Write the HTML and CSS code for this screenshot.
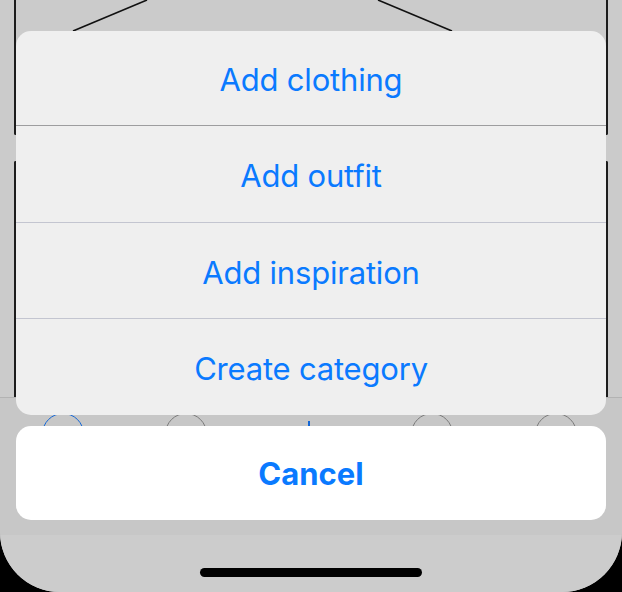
FILE: index.html
```html
<!DOCTYPE html>
<html>
<head>
<meta charset="utf-8">
<link rel="stylesheet" href="styles.css">
</head>
<body>
<div class="phone">
  <div class="screen">
    <div class="card card-top">
      <svg class="hanger" width="594" height="40" viewBox="0 0 594 40">
        <line x1="133" y1="0" x2="59" y2="31" />
        <line x1="364" y1="0" x2="438" y2="31" />
      </svg>
    </div>
    <div class="card card-main"></div>
    <div class="tabbar">
      <span class="tab tab-active"></span>
      <span class="tab"></span>
      <span class="tab-plus"></span>
      <span class="tab"></span>
      <span class="tab"></span>
    </div>
    <div class="home-area">
      <span class="home-indicator"></span>
    </div>
  </div>

  <div class="sheet">
    <div class="group">
      <div class="row row-first">Add clothing</div>
      <div class="row">Add outfit</div>
      <div class="row">Add inspiration</div>
      <div class="row row-last">Create category</div>
    </div>
    <div class="cancel">Cancel</div>
  </div>
</div>
</body>
</html>
```

FILE: styles.css
```css
html, body {
  margin: 0;
  padding: 0;
  background: #000;
}

body {
  width: 622px;
  height: 592px;
  overflow: hidden;
  font-family: Inter, "Liberation Sans", sans-serif;
}

.phone {
  position: relative;
  width: 622px;
  height: 592px;
  background: #cbcbcb;
  border-radius: 0 0 60px 60px;
  overflow: hidden;
}

.screen {
  display: flex;
  flex-direction: column;
  height: 100%;
}

.card {
  margin: 0 14px;
  box-sizing: border-box;
  border-left: 2px solid #1c1c1c;
  border-right: 2px solid #1c1c1c;
}

.card-top {
  height: 135px;
  border-bottom: 2px solid #1c1c1c;
  border-radius: 0 0 2px 2px;
}

.hanger {
  display: block;
  margin-left: -2px;
}

.hanger line {
  stroke: #111;
  stroke-width: 1.6;
}

.card-main {
  margin-top: 26px;
  height: 236px;
  border-top: 2px solid #1c1c1c;
  border-radius: 2px 2px 0 0;
}

.tabbar {
  height: 138px;
  background: #c7c7c7;
  border-top: 1px solid #b3b3b3;
  box-sizing: border-box;
  display: flex;
  align-items: flex-start;
  padding-top: 15px;
  padding-left: 42px;
}

.tab {
  width: 42px;
  height: 42px;
  border-radius: 50%;
  border: 1px solid #7a7a7a;
  box-sizing: border-box;
  flex: none;
}

.tab-active {
  border: 1.5px solid #1467d6;
}

.tab:nth-child(2) { margin-left: 81px; }
.tab:nth-child(4) { margin-left: 101px; }
.tab:nth-child(5) { margin-left: 82px; }

.tab-plus {
  width: 2px;
  height: 6px;
  margin-top: 8px;
  margin-left: 101px;
  background: #1467d6;
  flex: none;
}

.home-area {
  flex: 1;
  background: #cccccc;
  display: flex;
  justify-content: center;
  padding-top: 33px;
}

.home-indicator {
  width: 222px;
  height: 9px;
  border-radius: 5px;
  background: #000;
}

.sheet {
  position: absolute;
  left: 16px;
  top: 31px;
  width: 590px;
  display: flex;
  flex-direction: column;
  gap: 11px;
}

.group {
  background: #efefef;
  border-radius: 15px;
  overflow: hidden;
  display: flex;
  flex-direction: column;
}

.row {
  box-sizing: border-box;
  height: 96px;
  padding-top: 3px;
  display: flex;
  align-items: center;
  justify-content: center;
  color: #0a7aff;
  font-size: 31px;
  font-weight: 400;
  letter-spacing: -0.2px;
  border-top: 1px solid #c3c5d0;
}

.row-first {
  height: 95px;
  padding-top: 2px;
  border-top: none;
  border-bottom: 1px solid #9d9d9f;
}

.row-first + .row {
  border-top: none;
}

.row-last {
  height: 97px;
}

.cancel {
  height: 94px;
  background: #fff;
  border-radius: 15px;
  display: flex;
  align-items: center;
  justify-content: center;
  color: #0a7aff;
  font-size: 31px;
  font-weight: 700;
  letter-spacing: 0;
}
```
